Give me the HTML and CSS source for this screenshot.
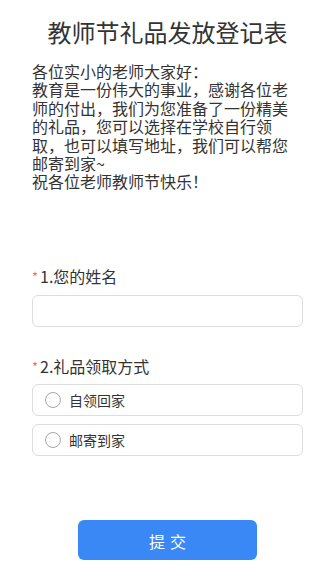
FILE: index.html
```html
<!DOCTYPE html>
<html lang="zh-CN">
<head>
    <meta charset="UTF-8">
    <meta name="viewport" content="width=device-width, initial-scale=1.0">
    <title>教师节礼品发放登记表</title>
    <link rel="stylesheet" href="styles.css">
</head>
<body>
    <div class="container">
        <h1 class="title">教师节礼品发放登记表</h1>

        <div class="intro">
            <p>各位实小的老师大家好：</p>
            <p>教育是一份伟大的事业，感谢各位老师的付出，我们为您准备了一份精美的礼品，您可以选择在学校自行领取，也可以填写地址，我们可以帮您邮寄到家~</p>
            <p>祝各位老师教师节快乐！</p>
        </div>

        <div class="question q-name">
            <div class="label"><span class="required">*</span>1.您的姓名</div>
            <input type="text" class="text-input">
        </div>

        <div class="question q-way">
            <div class="label"><span class="required">*</span>2.礼品领取方式</div>
            <label class="option">
                <span class="radio"></span>
                <span class="option-text">自领回家</span>
            </label>
            <label class="option">
                <span class="radio"></span>
                <span class="option-text">邮寄到家</span>
            </label>
        </div>

        <div class="submit-row">
            <button class="submit-btn">提交</button>
        </div>
    </div>
</body>
</html>
```

FILE: styles.css
```css
body {
    margin: 0;
    font-family: "Noto Sans CJK SC", "Noto Sans", sans-serif;
    color: #333;
    background: #fff;
}
.container {
    padding: 16px 32px 0 32px;
}
.title {
    margin: 0;
    font-size: 24px;
    font-weight: normal;
    line-height: 32px;
    text-align: center;
    color: #333;
}
.intro {
    margin-top: 14px;
    font-size: 16px;
    line-height: 18.4px;
}
.intro p {
    margin: 0;
}
.question .label {
    position: relative;
    font-size: 16px;
    line-height: 20px;
    padding-left: 8px;
}
.required {
    position: absolute;
    left: 0;
    top: 4px;
    color: #f56c6c;
    font-size: 13px;
    line-height: 13px;
}
.q-name {
    margin-top: 75px;
}
.text-input {
    display: block;
    box-sizing: border-box;
    width: 100%;
    height: 32px;
    margin-top: 9px;
    border: 1px solid #dcdcdc;
    border-radius: 6px;
    outline: none;
}
.q-way {
    margin-top: 29px;
}
.option {
    display: flex;
    align-items: center;
    box-sizing: border-box;
    height: 32px;
    margin-top: 8px;
    padding-left: 12px;
    border: 1px solid #dcdcdc;
    border-radius: 6px;
    font-size: 14px;
}
.radio {
    width: 14px;
    height: 14px;
    border: 1px solid #a6a6a6;
    border-radius: 50%;
    margin-right: 8px;
}
.submit-row {
    display: flex;
    justify-content: center;
    margin-top: 64px;
}
.submit-btn {
    width: 179px;
    height: 40px;
    border: none;
    border-radius: 6px;
    background-color: #3a88f5;
    color: #fff;
    font-family: inherit;
    font-size: 16px;
    letter-spacing: 5px;
    padding: 3px 0 0 5px;
}
```
